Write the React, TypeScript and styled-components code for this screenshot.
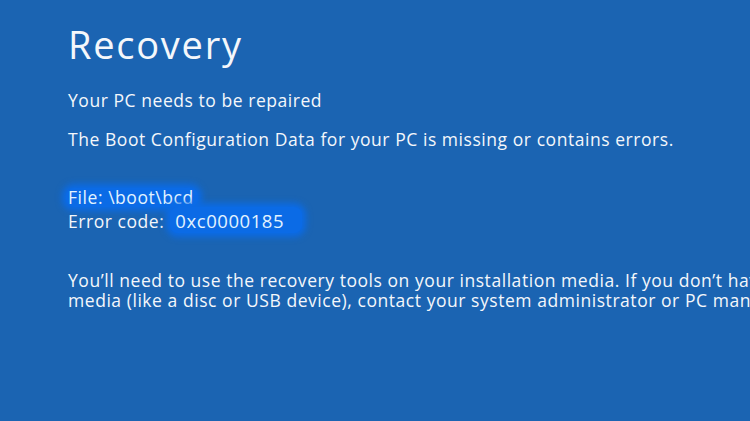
import styled, { createGlobalStyle } from "styled-components";

const GlobalStyle = createGlobalStyle`
  html, body {
    margin: 0;
    padding: 0;
    background: #1b64b2;
  }
`;

const Screen = styled.div`
  width: 750px;
  height: 421px;
  overflow: hidden;
  background: #1b64b2;
  color: #f4f7fb;
  font-family: "Open Sans", "Noto Sans", sans-serif;
  padding: 18px 0 0 68px;
  box-sizing: border-box;
  white-space: nowrap;
`;

const Title = styled.h1`
  margin: 0;
  font-size: 38px;
  font-weight: 400;
  line-height: 52px;
  letter-spacing: 1.75px;
`;

const Line = styled.p<{ $top: number }>`
  margin: ${(p) => p.$top}px 0 0;
  font-size: 17.5px;
  line-height: 20px;
  letter-spacing: 0.55px;
`;

const Details = styled.div`
  margin-top: 38px;
  font-size: 17.5px;
  line-height: 20px;
  letter-spacing: 0.55px;
`;

const Glow = styled.span`
  display: inline-block;
  padding: 0 4px 0 2px;
  margin: 0 -4px 0 -2px;
  background: #0b6be6;
  color: #e2f3ff;
  border-radius: 8px;
  box-shadow: 0 0 6px 4px #0b6be6;
  line-height: 19px;
`;

const Code = styled(Glow)`
  margin: 0 0 0 6px;
  font-size: 18.5px;
  line-height: 23px;
  padding: 2px 18px 1px 5px;
`;

export default function App() {
  return (
    <>
      <GlobalStyle />
      <Screen>
        <Title>Recovery</Title>
        <Line $top={20}>Your PC needs to be repaired</Line>
        <Line $top={19}>
          The Boot Configuration Data for your PC is missing or contains errors.
        </Line>
        <Details>
          <div>
            <Glow>File: \boot\bcd</Glow>
          </div>
          <div>
            Error code:<Code>0xc0000185</Code>
          </div>
        </Details>
        <Line $top={37}>
          You’ll need to use the recovery tools on your installation media. If you don’t have any installation
          <br />
          media (like a disc or USB device), contact your system administrator or PC manufacturer.
        </Line>
      </Screen>
    </>
  );
}
